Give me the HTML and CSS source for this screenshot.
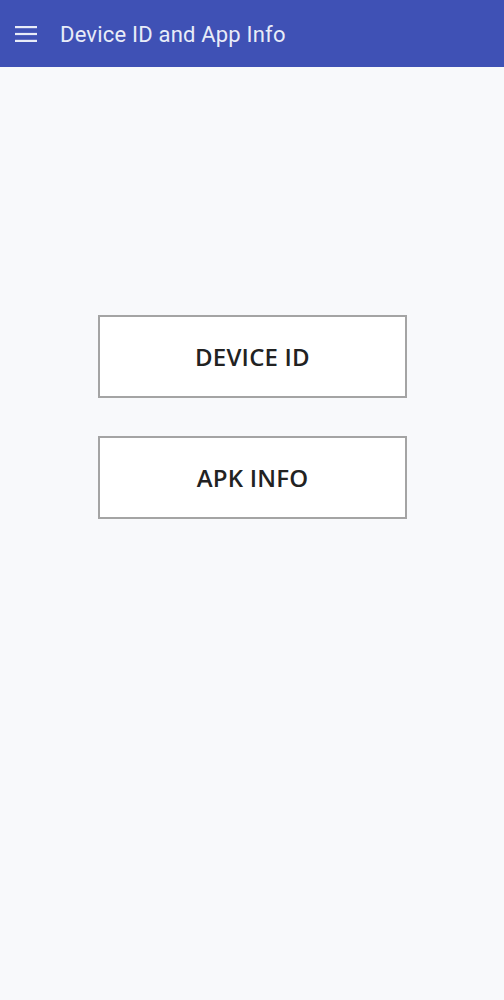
FILE: index.html
```html
<!DOCTYPE html>
<html>
<head>
<meta charset="utf-8">
<link rel="stylesheet" href="styles.css">
</head>
<body>
<header class="appbar">
  <svg class="menu" width="22" height="16" viewBox="0 0 22 16">
    <rect x="0" y="0" width="22" height="2.2" fill="#e8ecf8"/>
    <rect x="0" y="6.9" width="22" height="2.2" fill="#e8ecf8"/>
    <rect x="0" y="13.8" width="22" height="2.2" fill="#e8ecf8"/>
  </svg>
  <span class="title">Device ID and App Info</span>
</header>
<main class="content">
  <button class="btn">DEVICE ID</button>
  <button class="btn">APK INFO</button>
</main>
</body>
</html>
```
FILE: styles.css
```css
html, body {
  margin: 0;
  padding: 0;
  background: #f8f9fb;
}
body {
  width: 504px;
  height: 1000px;
  overflow: hidden;
}
.appbar {
  height: 67px;
  background: #3f51b5;
  display: flex;
  align-items: center;
  padding-left: 15px;
  box-sizing: border-box;
}
.menu {
  display: block;
  margin-top: 1px;
}
.title {
  margin-left: 23px;
  margin-top: 2px;
  font-family: Roboto, sans-serif;
  font-size: 22px;
  color: #e8ecf8;
  letter-spacing: 0.2px;
}
.content {
  display: flex;
  flex-direction: column;
  align-items: center;
  padding-top: 248px;
  padding-left: 1px;
  gap: 38px;
}
.btn {
  width: 309px;
  height: 83px;
  background: #ffffff;
  border: 2px solid #a4a4a4;
  border-radius: 0;
  font-family: "Open Sans", sans-serif;
  font-weight: 600;
  font-size: 24px;
  color: #222222;
  letter-spacing: 0.2px;
  padding: 0;
  box-sizing: border-box;
}
```
